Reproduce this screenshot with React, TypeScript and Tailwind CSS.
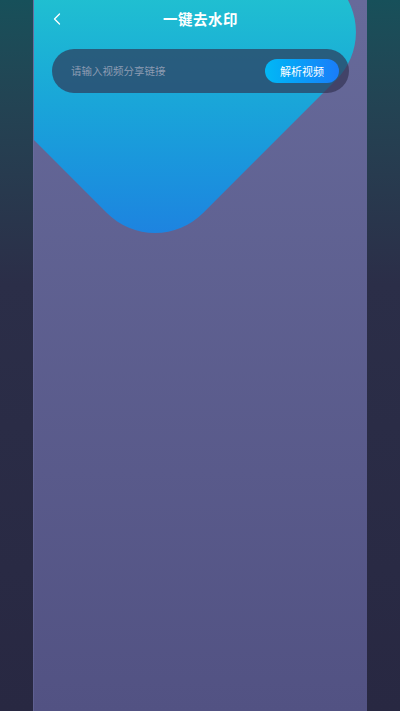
import { ChevronLeft } from 'lucide-react';

export default function App() {
  return (
    <div
      className="w-[400px] h-[711px] overflow-hidden flex justify-center bg-gradient-to-b from-[#17505a] via-[#2b2e48] via-40% to-[#282842]"
      style={{ fontFamily: '"Noto Sans CJK SC", "Noto Sans", sans-serif' }}
    >
      {/* 页面主体 */}
      <div className="relative w-[334px] h-full overflow-hidden bg-gradient-to-b from-[#676a9a] to-[#525283] border-l border-[#7476a8]/40">
        {/* 背景蓝色块 */}
        <div className="absolute left-[-41px] top-[-130px] w-[324px] h-[324px] rotate-45 rounded-[68px] bg-gradient-to-br from-[#21c2d0] from-40% to-[#1e82e0] to-95%" />

        <div className="relative flex flex-col">
          {/* 标题栏 */}
          <div className="h-[38px] flex items-center justify-center relative">
            <ChevronLeft className="absolute left-[13px] top-[9px] w-[20px] h-[20px] text-white" strokeWidth={1.5} />
            <h1 className="text-white text-[14.5px] font-bold tracking-[0.5px]">一键去水印</h1>
          </div>

          {/* 输入框 */}
          <div className="mx-[18px] mt-[11px] h-[44px] rounded-full bg-[#30304f]/65 flex items-center pl-[19px] pr-[10px]">
            <span className="flex-1 text-[10.5px] text-[#8d9bb2]">请输入视频分享链接</span>
            <button className="h-[24px] w-[74px] rounded-full bg-gradient-to-r from-[#03b8f5] to-[#1a7cf9] text-white text-[11px] flex items-center justify-center">
              解析视频
            </button>
          </div>
        </div>
      </div>
    </div>
  );
}
